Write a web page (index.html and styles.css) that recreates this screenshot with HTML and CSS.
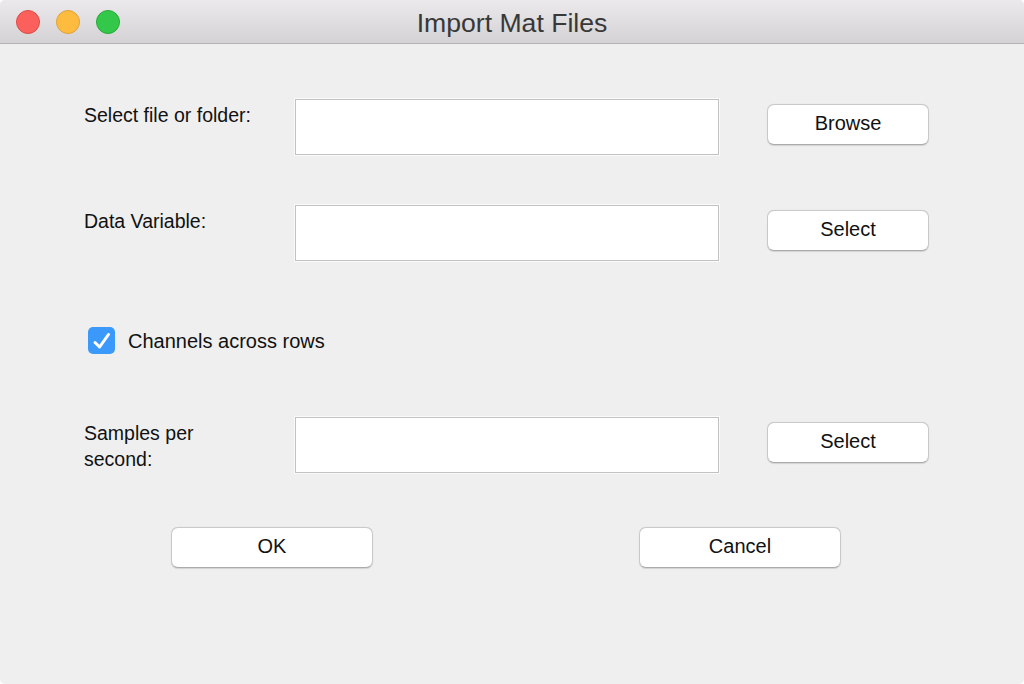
FILE: index.html
```html
<!DOCTYPE html>
<html>
<head>
<meta charset="utf-8">
<title>Import Mat Files</title>
<link rel="stylesheet" href="styles.css">
</head>
<body>
<div class="window">
  <div class="titlebar">
    <div class="lights">
      <span class="light red"></span>
      <span class="light yellow"></span>
      <span class="light green"></span>
    </div>
    <div class="title">Import Mat Files</div>
    <div class="spacer"></div>
  </div>
  <div class="content">
    <div class="row row-first">
      <div class="label">Select file or folder:</div>
      <div class="field"></div>
      <button class="btn side">Browse</button>
    </div>
    <div class="row row-second">
      <div class="label">Data Variable:</div>
      <div class="field"></div>
      <button class="btn side">Select</button>
    </div>
    <div class="check-row">
      <span class="checkbox">
        <svg width="27" height="27" viewBox="0 0 27 27"><path d="M7 15.5 L11.6 20 L20.5 7.5" fill="none" stroke="#fff" stroke-width="3" stroke-linecap="round" stroke-linejoin="round"/></svg>
      </span>
      <span class="check-label">Channels across rows</span>
    </div>
    <div class="row row-third">
      <div class="label">Samples per<br>second:</div>
      <div class="field"></div>
      <button class="btn side">Select</button>
    </div>
    <div class="actions">
      <button class="btn wide">OK</button>
      <button class="btn wide">Cancel</button>
    </div>
  </div>
</div>
</body>
</html>
```

FILE: styles.css
```css
html, body {
  margin: 0;
  padding: 0;
  background: #ffffff;
}

body {
  font-family: "Liberation Sans", Arial, sans-serif;
  color: #1a1a1a;
}

.window {
  width: 1024px;
  height: 684px;
  border-radius: 5px;
  overflow: hidden;
  background: #efefef;
  display: flex;
  flex-direction: column;
}

.titlebar {
  height: 43px;
  flex: none;
  border-bottom: 1px solid #b4b2b4;
  background: linear-gradient(#ebe9eb, #d4d2d4);
  display: grid;
  grid-template-columns: 1fr auto 1fr;
  align-items: center;
}

.lights {
  display: flex;
  gap: 16px;
  padding-left: 16px;
}

.light {
  width: 22px;
  height: 22px;
  border-radius: 50%;
  display: block;
  border: 1px solid transparent;
}

.red { background: #fc605c; border-color: #de4a46; }
.yellow { background: #fdbc40; border-color: #dea236; }
.green { background: #34c84a; border-color: #27aa35; }

.title {
  font-size: 26.6px;
  color: #383838;
  line-height: 30px;
  padding-top: 2px;
}

.content {
  display: flex;
  flex-direction: column;
}

.row {
  display: grid;
  grid-template-columns: 211px 472px 162px;
  padding-left: 84px;
  align-items: start;
  height: 56px;
}

.row-first { margin-top: 55px; }
.row-second { margin-top: 50px; }
.row-third { margin-top: 63px; }

.label {
  font-size: 19.5px;
  line-height: 26px;
  padding-top: 3px;
  color: #111;
}

.field {
  width: 424px;
  height: 56px;
  box-sizing: border-box;
  background: #ffffff;
  border: 1px solid #c2c2c2;
  box-shadow: 0 0 0 1px #fafafa;
}

.btn {
  font-family: "Liberation Sans", Arial, sans-serif;
  font-size: 20px;
  color: #111;
  background: #ffffff;
  border: 1px solid #c9c9c9;
  border-bottom-color: #ababab;
  border-radius: 7px;
  box-shadow: 0 0.5px 1px rgba(0, 0, 0, 0.12);
  height: 41px;
  padding: 0 0 2px 0;
  margin: 0;
  box-sizing: border-box;
}

.side {
  width: 162px;
  margin-top: 5px;
}

.check-row {
  margin-top: 66px;
  padding-left: 88px;
  display: flex;
  align-items: center;
  gap: 13px;
  height: 27px;
}

.checkbox {
  width: 27px;
  height: 27px;
  border-radius: 5px;
  background: #3b99fc;
  display: block;
}

.checkbox svg {
  display: block;
}

.check-label {
  font-size: 20px;
  color: #111;
  padding-top: 2px;
}

.actions {
  margin-top: 54px;
  padding-left: 171px;
  display: flex;
  gap: 266px;
}

.wide {
  width: 202px;
}
```
